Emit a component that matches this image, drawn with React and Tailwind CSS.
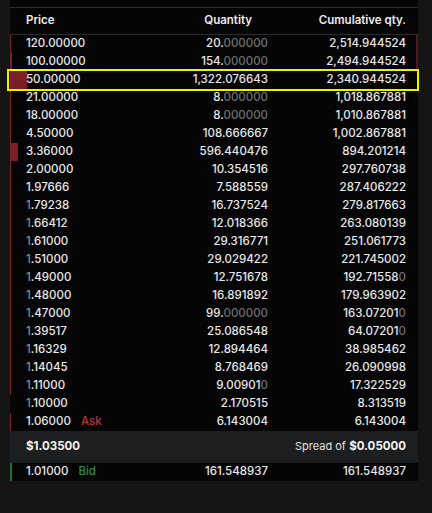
import React from "react";

const prices = ["120.00000","100.00000","50.00000","21.00000","18.00000","4.50000","3.36000","2.00000","1.97666","1.79238","1.66412","1.61000","1.51000","1.49000","1.48000","1.47000","1.39517","1.16329","1.14045","1.11000","1.10000","1.06000"];
const qtys = ["20.000000","154.000000","1,322.076643","8.000000","8.000000","108.666667","596.440476","10.354516","7.588559","16.737524","12.018366","29.316771","29.029422","12.751678","16.891892","99.000000","25.086548","12.894464","8.768469","9.009010","2.170515","6.143004"];
const cums = ["2,514.944524","2,494.944524","2,340.944524","1,018.867881","1,010.867881","1,002.867881","894.201214","297.760738","287.406222","279.817663","263.080139","251.061773","221.745002","192.715580","179.963902","163.072010","64.072010","38.985462","26.090998","17.322529","8.313519","6.143004"];

function Dimmed({ value }) {
  const m = value.match(/^(.*?)(0+)$/);
  if (!m) return <span>{value}</span>;
  return (
    <span>
      {m[1]}
      <span className="text-[#6f6f6f]">{m[2]}</span>
    </span>
  );
}

function Price({ value, i }) {
  if (i >= 9 && i <= 20) {
    return (
      <span>
        <span className="text-[#8a8a8a]">{value[0]}</span>
        {value.slice(1)}
      </span>
    );
  }
  return <span>{value}</span>;
}

export default function App() {
  const max = 1322.076643;
  return (
    <div
      className="min-h-screen w-full bg-[#151515] text-[#e8e8e8] text-[11.5px] font-medium"
      style={{ fontFamily: "Inter, 'Noto Sans', sans-serif" }}
    >
      <div className="ml-[10px] w-[408px] bg-[#050505] pt-[7px]">
        <div className="flex h-[28px] items-center border-t border-b border-[#2c2c2c] font-semibold text-[#ececec]">
          <div className="w-[136px] pl-[16px]">Price</div>
          <div className="w-[122px] pr-[16px] text-right">Quantity</div>
          <div className="w-[138px] text-right">Cumulative qty.</div>
        </div>
        <div className="relative">
          {prices.map((p, i) => (
            <div key={p} className="relative flex h-[18px] items-center">
              <div
                className="absolute left-0 top-0 h-full bg-[#7a1f26]"
                style={{ width: `${(parseFloat(qtys[i].replace(/,/g, "")) / max) * 17}px` }}
              />
              {i < 2 && (
                <div className="absolute right-0 top-0 h-full w-[2px] bg-[#4a1a1d]" />
              )}
              <div className="relative flex w-[136px] items-center pl-[16px]">
                <Price value={p} i={i} />
                {i === prices.length - 1 && (
                  <span className="ml-[10px] text-[#b8333b]">Ask</span>
                )}
              </div>
              <div className="relative w-[122px] text-right">
                <Dimmed value={qtys[i]} />
              </div>
              <div className="relative w-[138px] text-right">
                <Dimmed value={cums[i]} />
              </div>
            </div>
          ))}
          <div className="pointer-events-none absolute left-[-3px] right-[-1px] top-[34px] h-[22px] border-2 border-[#f2f200]" />
        </div>
        <div className="flex h-[32px] items-center justify-between bg-[#1d1e20] pl-[16px] pr-[12px] text-[11.5px]">
          <span className="font-bold text-[#f2f2f2]">$1.03500</span>
          <span className="font-normal text-[#e0e0e0]">
            <span className="text-[11px]">Spread of</span>{" "}
            <span className="font-bold text-[#f2f2f2]">$0.05000</span>
          </span>
        </div>
        <div className="relative flex h-[18px] items-center">
          <div className="absolute left-0 top-0 h-full w-[2px] bg-[#1f6f3a]" />
          <div className="flex w-[136px] items-center pl-[16px]">
            <span>1.01000</span>
            <span className="ml-[10px] text-[#2f8a46]">Bid</span>
          </div>
          <div className="w-[122px] text-right">161.548937</div>
          <div className="w-[138px] text-right">161.548937</div>
        </div>
      </div>
    </div>
  );
}
